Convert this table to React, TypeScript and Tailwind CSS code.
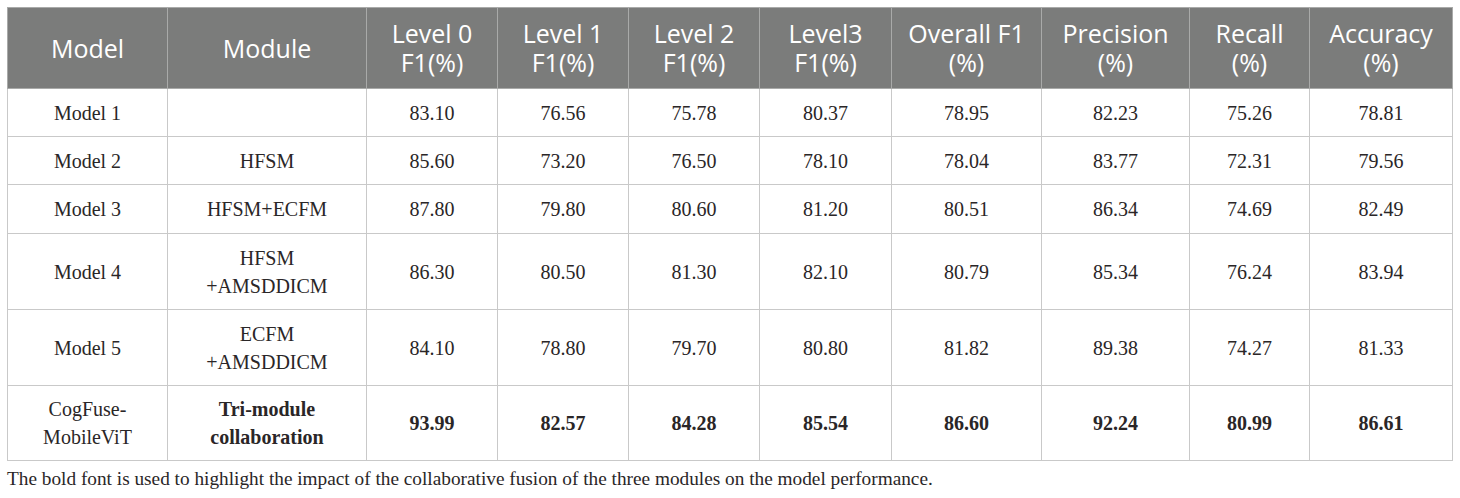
import React from 'react';

type Row = {
  model: string[];
  module: string[];
  values: string[];
  h: string;
  bold?: boolean;
};

const headers: string[][] = [
  ['Model'],
  ['Module'],
  ['Level 0', 'F1(%)'],
  ['Level 1', 'F1(%)'],
  ['Level 2', 'F1(%)'],
  ['Level3', 'F1(%)'],
  ['Overall F1', '(%)'],
  ['Precision', '(%)'],
  ['Recall', '(%)'],
  ['Accuracy', '(%)'],
];

const widths = [
  'w-[160px]',
  'w-[199px]',
  'w-[131px]',
  'w-[131px]',
  'w-[131px]',
  'w-[132px]',
  'w-[150px]',
  'w-[148px]',
  'w-[120px]',
  'w-[143px]',
];

const rows: Row[] = [
  { model: ['Model 1'], module: [], h: 'h-[48px]', values: ['83.10', '76.56', '75.78', '80.37', '78.95', '82.23', '75.26', '78.81'] },
  { model: ['Model 2'], module: ['HFSM'], h: 'h-[48px]', values: ['85.60', '73.20', '76.50', '78.10', '78.04', '83.77', '72.31', '79.56'] },
  { model: ['Model 3'], module: ['HFSM+ECFM'], h: 'h-[49px]', values: ['87.80', '79.80', '80.60', '81.20', '80.51', '86.34', '74.69', '82.49'] },
  { model: ['Model 4'], module: ['HFSM', '+AMSDDICM'], h: 'h-[76px]', values: ['86.30', '80.50', '81.30', '82.10', '80.79', '85.34', '76.24', '83.94'] },
  { model: ['Model 5'], module: ['ECFM', '+AMSDDICM'], h: 'h-[76px]', values: ['84.10', '78.80', '79.70', '80.80', '81.82', '89.38', '74.27', '81.33'] },
  {
    model: ['CogFuse-', 'MobileViT'],
    module: ['Tri-module', 'collaboration'],
    h: 'h-[75px]',
    values: ['93.99', '82.57', '84.28', '85.54', '86.60', '92.24', '80.99', '86.61'],
    bold: true,
  },
];

const Lines: React.FC<{ lines: string[] }> = ({ lines }) => (
  <>
    {lines.map((l, i) => (
      <div key={i}>{l}</div>
    ))}
  </>
);

const App: React.FC = () => {
  return (
    <div className="w-[1460px] h-[498px] bg-white pl-[7px] pt-[7px]">
      <table className="table-fixed border-collapse w-[1446px]">
        <colgroup>
          {widths.map((w, i) => (
            <col key={i} className={w} />
          ))}
        </colgroup>
        <thead>
          <tr className="bg-[#7b7c7b] text-white">
            {headers.map((h, i) => (
              <th
                key={i}
                className="h-[81px] border border-[#a9aaa9] px-1 text-center align-middle text-[25px] font-normal leading-[29px] font-['Open_Sans',sans-serif]"
              >
                <Lines lines={h} />
              </th>
            ))}
          </tr>
        </thead>
        <tbody className="font-['Liberation_Serif',serif] text-[20px] text-[#2a2627] leading-[28px]">
          {rows.map((r, ri) => (
            <tr key={ri}>
              <td className={`border border-[#c9c9c9] text-center align-middle p-0 ${r.h}`}>
                <Lines lines={r.model} />
              </td>
              <td
                className={`border border-[#c9c9c9] text-center align-middle p-0 ${
                  r.bold ? 'font-bold' : ''
                }`}
              >
                <Lines lines={r.module} />
              </td>
              {r.values.map((v, vi) => (
                <td
                  key={vi}
                  className={`border border-[#c9c9c9] text-center align-middle p-0 ${
                    r.bold ? 'font-bold' : ''
                  }`}
                >
                  {v}
                </td>
              ))}
            </tr>
          ))}
        </tbody>
      </table>
      <p className="mt-[6px] font-['Liberation_Serif',serif] text-[19.3px] leading-[24px] text-[#2a2627]">
        The bold font is used to highlight the impact of the collaborative fusion of the three modules on the model performance.
      </p>
    </div>
  );
};

export default App;
